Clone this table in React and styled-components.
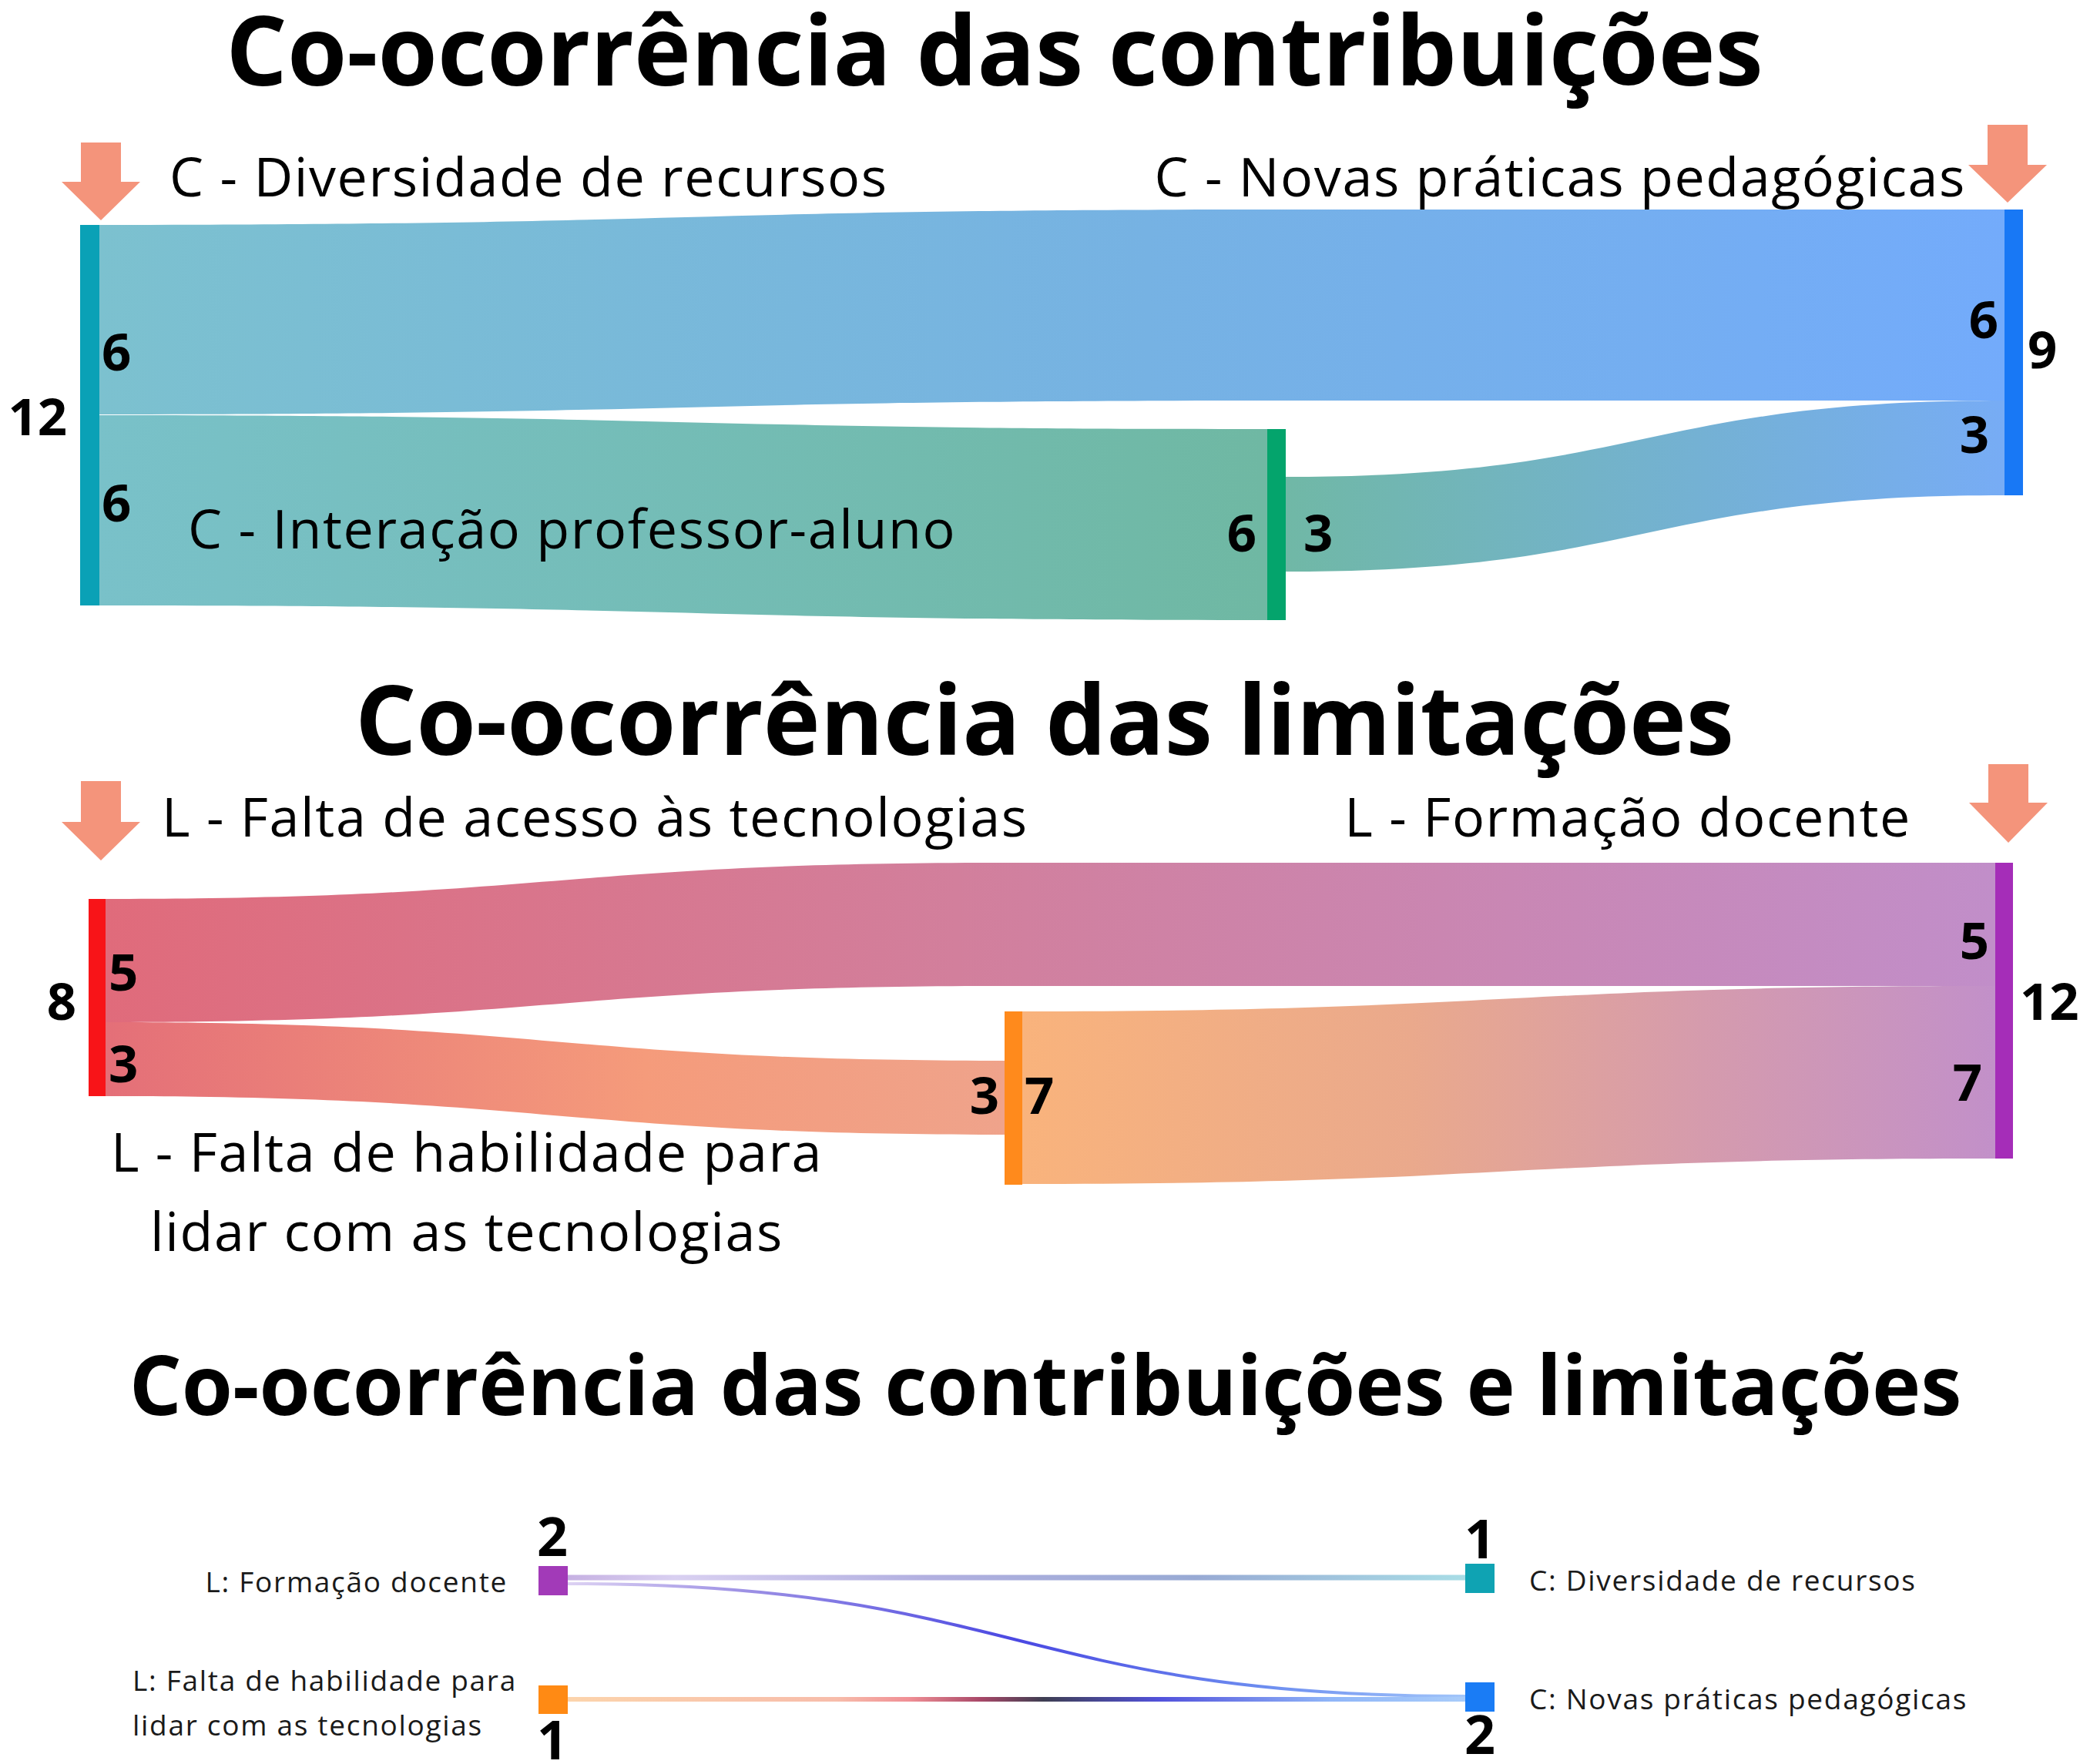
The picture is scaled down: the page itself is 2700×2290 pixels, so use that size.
import styled, { createGlobalStyle } from 'styled-components'

const GlobalStyle = createGlobalStyle`
  html, body {
    margin: 0;
    padding: 0;
    background: #fff;
  }
  body {
    width: 2700px;
    height: 2290px;
    overflow: hidden;
    font-family: "Open Sans", "Noto Sans", sans-serif;
    color: #000;
  }
`

const Page = styled.main`
  width: 2700px;
  height: 2290px;
  display: flex;
  flex-direction: column;
`

const Title = styled.h1`
  margin: 0;
  padding: ${p => p.$top}px ${p => p.$right || 0}px 0 ${p => p.$left || 0}px;
  font-family: "Open Sans", "Noto Sans", sans-serif;
  font-weight: 700;
  font-size: ${p => p.$size}px;
  line-height: ${p => p.$line}px;
  text-align: center;
  white-space: nowrap;
  color: #000;
`

const Chart = styled.svg`
  display: block;
  width: 2700px;
  height: ${p => p.$h}px;
  overflow: visible;
  flex-shrink: 0;
`

const Flow = styled.path`
  stroke: none;
`

const Bar = styled.rect`
  fill: ${p => p.$color};
`

const Pointer = styled.polygon`
  fill: #f4947b;
`

const Value = styled.text`
  font-family: "Open Sans", "Noto Sans", sans-serif;
  font-weight: 700;
  font-size: ${p => p.$size || 67}px;
  fill: #000;
`

const Caption = styled.text`
  font-family: "Open Sans", "Noto Sans", sans-serif;
  font-weight: 400;
  font-size: ${p => p.$size || 70}px;
  letter-spacing: ${p => p.$track || 1.6}px;
  fill: ${p => p.$color || '#000'};
`

const Thread = styled.path`
  fill: none;
  stroke-width: ${p => p.$w}px;
`

// sankey ribbon: curved part from x0 to x1, optional straight run to x2
const ribbon = (x0, a0, b0, x1, a1, b1, x2) => {
  const m = (x0 + x1) / 2
  const end = x2 || x1
  return `M${x0},${a0} C${m},${a0} ${m},${a1} ${x1},${a1} L${end},${a1} L${end},${b1} L${x1},${b1} C${m},${b1} ${m},${b0} ${x0},${b0} Z`
}

const arrow = (cx, top, neck, tip) =>
  `${cx - 26},${top} ${cx + 26},${top} ${cx + 26},${neck} ${cx + 51},${neck} ${cx},${tip} ${cx - 51},${neck} ${cx - 26},${neck}`

const Grad = ({ id, x1, x2, stops }) => (
  <linearGradient id={id} gradientUnits='userSpaceOnUse' x1={x1} x2={x2} y1='0' y2='0'>
    {stops.map(([o, c]) => <stop key={o} offset={o} stopColor={c} />)}
  </linearGradient>
)

const Contribuicoes = () => (
  <Chart $h={707} viewBox='0 123 2700 707'>
    <defs>
      <Grad id='c-top' x1={128} x2={2602} stops={[[0, '#7cc1cf'], [0.55, '#76b2e3'], [1, '#73abfb']]} />
      <Grad id='c-low' x1={128} x2={1645} stops={[[0, '#79c1c9'], [1, '#6fb8a3']]} />
      <Grad id='c-mid' x1={1669} x2={2602} stops={[[0, '#70b8a6'], [1, '#77acf5']]} />
    </defs>
    <Flow d={ribbon(128, 290, 536, 1645, 270, 518, 2602)} fill='url(#c-top)' />
    <Flow d={ribbon(128, 537, 784, 1645, 555, 803)} fill='url(#c-low)' />
    <Flow d={ribbon(1669, 617, 740, 2602, 518, 641)} fill='url(#c-mid)' />

    <Bar x={104} y={290} width={25} height={494} $color='#0aa1b6' />
    <Bar x={1645} y={555} width={24} height={248} $color='#04a46c' />
    <Bar x={2602} y={270} width={24} height={371} $color='#1878f5' />

    <Pointer points={arrow(131, 183, 234, 284)} />
    <Pointer points={arrow(2606, 160, 212, 261)} />

    <Caption x={220} y={253}>C - Diversidade de recursos</Caption>
    <Caption x={2552} y={253} textAnchor='end'>C - Novas práticas pedagógicas</Caption>
    <Caption x={244} y={710}>C - Interação professor-aluno</Caption>

    <Value x={87} y={563} textAnchor='end'>12</Value>
    <Value x={132} y={479}>6</Value>
    <Value x={132} y={675}>6</Value>
    <Value x={2594} y={437} textAnchor='end'>6</Value>
    <Value x={2582} y={586} textAnchor='end'>3</Value>
    <Value x={2632} y={476}>9</Value>
    <Value x={1631} y={714} textAnchor='end'>6</Value>
    <Value x={1692} y={714}>3</Value>
  </Chart>
)

const Limitacoes = () => (
  <Chart $h={690} viewBox='0 990 2700 690'>
    <defs>
      <Grad id='l-top' x1={136} x2={2590} stops={[[0, '#e06b7b'], [0.45, '#d27f9c'], [1, '#c18ec9']]} />
      <Grad id='l-low' x1={136} x2={1304} stops={[[0, '#e46f78'], [0.6, '#f59b7b'], [1, '#efa38b']]} />
      <Grad id='l-mid' x1={1326} x2={2590} stops={[[0, '#f9b37c'], [0.4, '#eaa98c'], [0.7, '#d59bad'], [1, '#c290c9']]} />
    </defs>
    <Flow d={ribbon(136, 1167, 1327, 1304, 1120, 1280, 2590)} fill='url(#l-top)' />
    <Flow d={ribbon(136, 1327, 1423, 1304, 1377, 1473)} fill='url(#l-low)' />
    <Flow d={ribbon(1326, 1313, 1537, 2590, 1280, 1504)} fill='url(#l-mid)' />

    <Bar x={115} y={1167} width={22} height={256} $color='#f81418' />
    <Bar x={1304} y={1313} width={23} height={225} $color='#ff8a1c' />
    <Bar x={2590} y={1120} width={23} height={384} $color='#a52db8' />

    <Pointer points={arrow(131, 1014, 1067, 1117)} />
    <Pointer points={arrow(2607, 992, 1042, 1094)} />

    <Caption x={210} y={1086}>L - Falta de acesso às tecnologias</Caption>
    <Caption x={2481} y={1086} textAnchor='end'>L - Formação docente</Caption>
    <Caption x={606} y={1521} textAnchor='middle'>L - Falta de habilidade para</Caption>
    <Caption x={606} y={1624} textAnchor='middle'>lidar com as tecnologias</Caption>

    <Value x={99} y={1324} textAnchor='end'>8</Value>
    <Value x={141} y={1286}>5</Value>
    <Value x={141} y={1405}>3</Value>
    <Value x={1297} y={1446} textAnchor='end'>3</Value>
    <Value x={1330} y={1446}>7</Value>
    <Value x={2582} y={1245} textAnchor='end'>5</Value>
    <Value x={2573} y={1429} textAnchor='end'>7</Value>
    <Value x={2622} y={1324}>12</Value>
  </Chart>
)

const Cruzamento = () => (
  <Chart $h={441} viewBox='0 1849 2700 441'>
    <defs>
      <Grad id='x-top' x1={737} x2={1902} stops={[[0, '#c6b1e2'], [0.12, '#d9d0f1'], [0.4, '#b2b0e0'], [0.7, '#98aad4'], [1, '#a8dde6']]} />
      <Grad id='x-curve' x1={737} x2={1902} stops={[[0, '#ddd2f3'], [0.2, '#9c90e4'], [0.5, '#4a48e2'], [0.78, '#6d8ef0'], [1, '#a2c6fa']]} />
      <Grad id='x-low' x1={737} x2={1902} stops={[[0, '#fcd4ac'], [0.3, '#f7bcaa'], [0.38, '#f08f95'], [0.46, '#a84868'], [0.53, '#3e3e52'], [0.66, '#5252dc'], [0.85, '#90b6f8'], [1, '#a8ccfa']]} />
    </defs>
    <Thread d='M737,2048 L1902,2048' stroke='url(#x-top)' $w={7} />
    <Thread d='M737,2056 C1320,2056 1320,2202 1902,2202' stroke='url(#x-curve)' $w={4} />
    <Thread d='M737,2206 L1902,2206' stroke='url(#x-low)' $w={6} />

    <Bar x={699} y={2033} width={38} height={38} $color='#a23ab8' />
    <Bar x={699} y={2188} width={38} height={37} $color='#ff8a14' />
    <Bar x={1902} y={2030} width={38} height={38} $color='#0fa3b3' />
    <Bar x={1902} y={2184} width={38} height={38} $color='#1a7cf5' />

    <Value x={717} y={2020} textAnchor='middle' $size={70}>2</Value>
    <Value x={717} y={2284} textAnchor='middle' $size={70}>1</Value>
    <Value x={1921} y={2023} textAnchor='middle' $size={70}>1</Value>
    <Value x={1921} y={2277} textAnchor='middle' $size={70}>2</Value>

    <Caption x={659} y={2067} textAnchor='end' $size={37} $track={1.7} $color='#1a1a1a'>L: Formação docente</Caption>
    <Caption x={172} y={2195} $size={37} $track={1.7} $color='#1a1a1a'>L: Falta de habilidade para</Caption>
    <Caption x={172} y={2253} $size={37} $track={1.7} $color='#1a1a1a'>lidar com as tecnologias</Caption>
    <Caption x={1985} y={2065} $size={37} $track={1.7} $color='#1a1a1a'>C: Diversidade de recursos</Caption>
    <Caption x={1985} y={2219} $size={37} $track={1.7} $color='#1a1a1a'>C: Novas práticas pedagógicas</Caption>
  </Chart>
)

const App = () => (
  <Page>
    <GlobalStyle />
    <Title $size={125} $line={125} $top={0} $right={118}>Co-ocorrência das contribuições</Title>
    <Contribuicoes />
    <Title $size={125} $line={117} $top={41} $left={12}>Co-ocorrência das limitações</Title>
    <Limitacoes />
    <Title $size={107} $line={107} $top={62} $left={14}>Co-ocorrência das contribuições e limitações</Title>
    <Cruzamento />
  </Page>
)

export default App
